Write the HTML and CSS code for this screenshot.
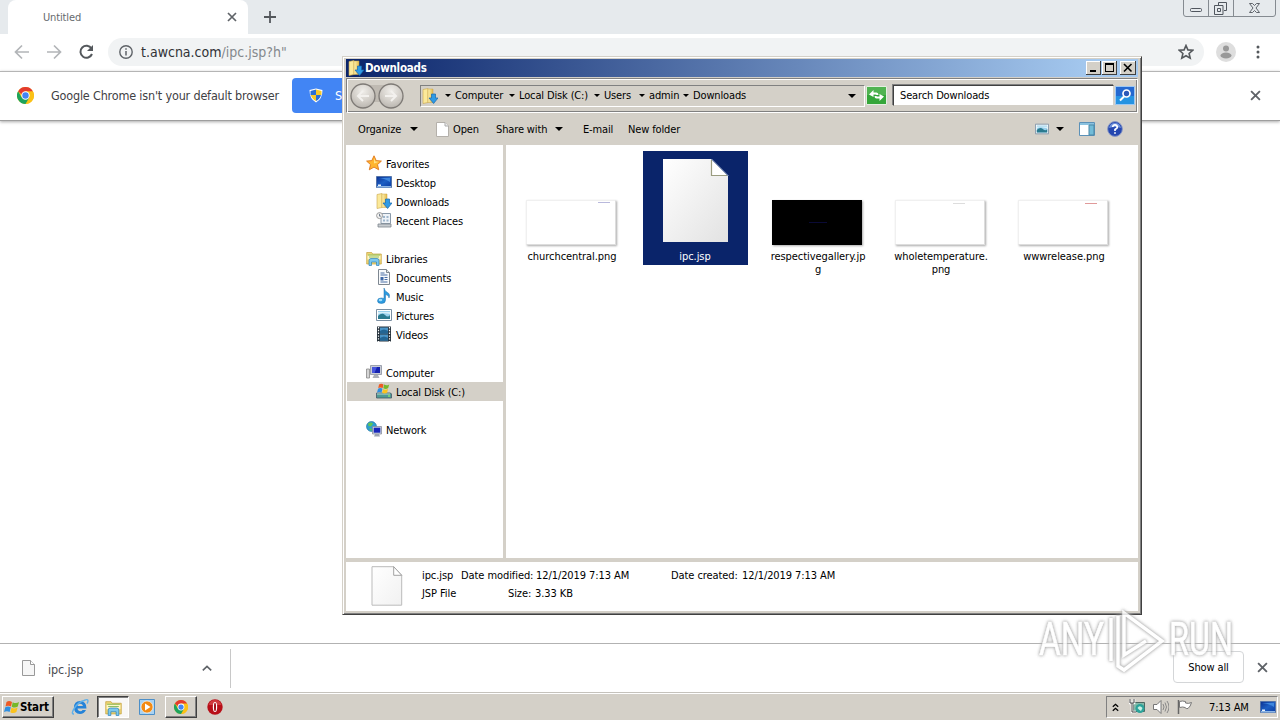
FILE: index.html
```html
<!DOCTYPE html>
<html lang="en">
<head>
<meta charset="utf-8">
<title>Downloads</title>
<link rel="stylesheet" href="styles.css">
</head>
<body>
<svg width="0" height="0" class="defs">
  <defs>
    <linearGradient id="gFolder" x1="0" x2="1"><stop offset="0" stop-color="#fff3b0"/><stop offset="1" stop-color="#e3b94c"/></linearGradient>
    <linearGradient id="gPage" x1="0" y1="0" x2="1" y2="1"><stop offset="0" stop-color="#fff"/><stop offset="1" stop-color="#e2e2e2"/></linearGradient>
    <linearGradient id="gPale" x1="0" y1="0" x2="1" y2="1"><stop offset="0" stop-color="#fff"/><stop offset="1" stop-color="#f1f1f1"/></linearGradient>
    <linearGradient id="gBlue" x1="0" y1="0" x2="1" y2="1"><stop offset="0" stop-color="#0b2f8f"/><stop offset=".5" stop-color="#1d5fc4"/><stop offset="1" stop-color="#0a3aa0"/></linearGradient>
    <radialGradient id="gNav" cx=".5" cy=".3" r=".75"><stop offset="0" stop-color="#f0eeea"/><stop offset=".6" stop-color="#d0ccc6"/><stop offset="1" stop-color="#b5b1ab"/></radialGradient>
    <symbol id="dl" viewBox="0 0 16 16"><path d="M1 1.500 6 .5v14l-5 1z" fill="#fbe99a" stroke="#c9a64a" stroke-width=".6"/><path d="M6 1h5v13.500H6z" fill="url(#gFolder)" stroke="#c9a64a" stroke-width=".5"/><path d="M9.500 6h4v4H16l-4.400 5.500L7 10h2.500z" fill="#2f9be6" stroke="#1767ad" stroke-width=".7"/></symbol>
    <symbol id="lib" viewBox="0 0 16 16"><path d="M.7 2.500h5l1 1.500h8.600v10H.7z" fill="#efd675" stroke="#c4a03d" stroke-width=".7"/><path d="M1.500 5.500h13v4h-13z" fill="#fff6c6"/><path d="M2 5h12M3 7h10" stroke="#8bbf64" stroke-width="1"/><path d="M3 15.500v-5q0-2 2-2h6q2 0 2 2v5h-2.500v-3.500h-5v3.500z" fill="#7cc8ee" stroke="#2c83bb" stroke-width=".7"/></symbol>
    <symbol id="star" viewBox="0 0 16 16"><path d="m8 .8 2.200 4.800 5.200.5-3.900 3.500 1.200 5.200L8 12.100l-4.700 2.700 1.200-5.200L.6 6.100l5.200-.5z" fill="#ffb52e" stroke="#e0761a" stroke-width=".9"/><path d="m8 3 1.300 3.500 3.700.3-5 1.700z" fill="#ffe28a"/></symbol>
    <symbol id="desk" viewBox="0 0 16 16"><path d="M.5 2.500h15v11H.5z" fill="url(#gBlue)" stroke="#5574a8"/><path d="M2 4q6 0 12 4V4z" fill="#3e86dd"/><path d="M1 12h14v1.500H1z" fill="#8db6e6"/><path d="M2 10.500h3v1.500H2z" fill="#e8f2fc"/></symbol>
    <symbol id="recent" viewBox="0 0 16 16"><path d="M5 1.500h9.500v10H5z" fill="#eef3f8" stroke="#8a9aaa"/><path d="M7 4h2v2H7zM10.500 4h2v2h-2zM7 7.500h2v2H7zM10.500 7.500h2v2h-2z" fill="#9db6cc"/><path d="M2 12h13v3H2z" fill="#c7ccd0" stroke="#7e868e" stroke-width=".8"/><circle cx="3.600" cy="3.600" r="3" fill="#f3f3f3" stroke="#9a9a9a"/><path d="M3.500 1.800v2.300H5.200" fill="none" stroke="#567" stroke-width=".8"/></symbol>
    <symbol id="doc" viewBox="0 0 16 16"><path d="M2.500.5h8l3 3v12h-11z" fill="#f8fafc" stroke="#7e8791"/><path d="M10.500.5v3h3" fill="#dfe5ea" stroke="#7e8791"/><path d="M4.500 4h4M4.500 6h7M8.500 8.500h3M8.500 10.500h3M4.500 13h7" stroke="#4a6ea5"/><path d="M4.500 8h3v3.500h-3z" fill="#3d67a6"/></symbol>
    <symbol id="music" viewBox="0 0 16 16"><path d="M8 0q.5 3 3.500 4.500T13 10q0-3-3.500-3.500V12q0 3.500-4 3.500t-4-2.500q0-3 3.500-3 1.500 0 3 .5z" fill="#2c9be0" stroke="#1c6fac" stroke-width=".5"/><ellipse cx="4.500" cy="12" rx="1.800" ry="1.200" fill="#9fdcfa"/></symbol>
    <symbol id="pic" viewBox="0 0 16 16"><path d="M.5 2.500h15v11H.5z" fill="#fff" stroke="#7a8fa2"/><path d="M2 4h12v8H2z" fill="#9ad0ec"/><path d="M2 9q4-4 7-1t5 0v4H2z" fill="#2a7a8f"/><path d="M2 7.500q3-2 5-1.500l7 1V5H2z" fill="#d8eff8"/></symbol>
    <symbol id="video" viewBox="0 0 16 16"><path d="M1 .5h14v15H1z" fill="#26323c"/><path d="M4 1.500h8v6H4zM4 8.500h8v6H4z" fill="#4b95c8"/><path d="M4 5q4-3 8 0v2.500H4zM4 12q4-3 8 0v2.500H4z" fill="#226593"/><path d="M2.500 1v15M13.500 1v15" stroke="#fff" stroke-width="1.200" stroke-dasharray="1.400 1.400"/></symbol>
    <symbol id="comp" viewBox="0 0 16 16"><path d="M.5 5h3v9h-3z" fill="#d5d5d5" stroke="#888" stroke-width=".8"/><path d="M4.500 1.500h11v9h-11z" fill="#c7cbd6" stroke="#8a90a0" stroke-width=".8"/><path d="M6 3h8v6H6z" fill="#1522b0"/><path d="M6 3h5L8.500 9H6z" fill="#4755dd"/><path d="M8 11h4l1.500 3h-7z" fill="#a9adb8"/></symbol>
    <symbol id="flag" viewBox="0 0 16 16"><path d="M2.500 3Q5 1 8 3L7 7.500Q4 6 1.500 7.500z" fill="#ee5a24"/><path d="M8.700 3.200Q12 5 15 3l-1.200 4.500Q11 9.500 7.700 7.700z" fill="#76b82a"/><path d="M1.300 8.300Q4 6.700 6.800 8.300L5.600 13Q3 11.500 0 13z" fill="#2f8fe0"/><path d="M7.500 8.500Q10 10.300 13.600 8.500l-1.200 4.600Q9.500 15 6.300 13.200z" fill="#fbc31e"/></symbol>
    <symbol id="disk" viewBox="0 0 16 16"><path d="M.5 10h14l1 1v4H.5z" fill="#4f9a94" stroke="#456" stroke-width=".8"/><path d="M1 11h13" stroke="#b8d8cc"/><path d="M12 13h2" stroke="#9f6"/><use href="#flag" x="1" y="-1" width="13" height="13"/></symbol>
    <symbol id="net" viewBox="0 0 16 16"><circle cx="5.500" cy="5.500" r="5" fill="#2c9fd0" stroke="#1e6f9f" stroke-width=".6"/><path d="M2 2.500q3-2 5 0L5 5.500 2.500 5zM3 7l3 1-1 2.300z" fill="#62c455"/><path d="M6.500 5.500h9v7.500h-9z" fill="#ccd3e0" stroke="#7c8494" stroke-width=".7"/><path d="M7.700 6.700h6.600v5H7.700z" fill="#1826bb"/><path d="M9 13h4l1 2.500H8z" fill="#9ca3b0"/></symbol>
    <symbol id="page" viewBox="0 0 32 40"><path d="M1 .7h21.700l8 8.600v29.900H1z" fill="url(#gPale)" stroke="#bbb" stroke-width="1"/><path d="M22.700.7v8.600h8z" fill="#fff" stroke="#999" stroke-width=".9"/></symbol>
    <symbol id="chrome" viewBox="0 0 16 16"><circle cx="8" cy="8" r="8" fill="#fbc116"/><path d="M8 8V4h6.930A8 8 0 0 1 8 16l3.500-6z" fill="#fbc116"/><path d="M1.070 4 4.540 10 8 8l3.460 2L8 16A8 8 0 0 1 1.070 4z" fill="#1da45c"/><path d="M1.070 4A8 8 0 0 1 14.930 4H8L4.500 7z" fill="#e33b2e"/><circle cx="8" cy="8" r="3.900" fill="#fff"/><circle cx="8" cy="8" r="3" fill="#4285f4"/></symbol>
    <symbol id="x" viewBox="0 0 10 10"><path d="m1 1 8 8M9 1 1 9" stroke="#5f6368" stroke-width="1.700"/></symbol>
    <symbol id="tri" viewBox="0 0 8 4"><path d="M0 0h8L4 4z"/></symbol>
  </defs>
</svg>
<div class="screen">
  <div class="tabstrip">
    <div class="tab"><span>Untitled</span><svg width="10" height="10"><use href="#x"/></svg></div>
    <svg class="plus" width="12" height="12" viewBox="0 0 12 12"><path d="M6 0v12M0 6h12" stroke="#54585c" stroke-width="1.800"/></svg>
    <svg class="caption" width="93" height="18" viewBox="0 0 93 18" fill="none" stroke="#858b91"><path d="M.5-3v17q0 2.500 2.500 2.500h87q2.500 0 2.500-2.500V-3M25.500-1v17M50.500-1v17"/><g stroke="#50565e"><rect x="7.500" y="8.500" width="11" height="3" rx="1"/><path d="M35.500 5V2.500h8v8H41"/><path d="M31.500 5.500h8.500v9h-8.500z"/><path d="M34.500 8.500h3v3h-3z"/><path d="M66.500 3.500h3l2 2 2-2h3l-3.500 4.500 3.500 4.500h-3l-2-2-2 2h-3L70 8z" stroke-width=".9"/></g></svg>
  </div>
  <div class="navbar">
    <svg width="100" height="20" viewBox="0 0 100 20" fill="none" stroke-width="1.700"><path d="M29 10H16M22 3.500 15.500 10l6.500 6.500M47 10h13M54 3.500l6.500 6.500-6.500 6.500" stroke="#b2b5b8"/><path d="M91.500 6.500A6 6 0 1 0 92 12" stroke="#54585c" stroke-width="2"/><path d="M93 3v6h-6z" fill="#54585c"/></svg>
    <div class="omnibox">
      <svg width="14" height="14" viewBox="0 0 14 14"><circle cx="7" cy="7" r="6.200" fill="none" stroke="#5f6368" stroke-width="1.400"/><path d="M7 6v4.500M7 3.300v1.500" stroke="#5f6368" stroke-width="1.500"/></svg>
      <span class="url"><b>t.awcna.com</b>/ipc.jsp?h"</span>
      <svg class="bookmark" width="16" height="16" viewBox="0 0 16 16"><path d="m8 1.500 1.900 4.400 4.800.4-3.600 3.200 1.100 4.700L8 11.700l-4.200 2.500 1.100-4.700L1.300 6.300l4.800-.4z" fill="none" stroke="#54585c" stroke-width="1.600"/></svg>
    </div>
    <svg class="avatar" width="20" height="20" viewBox="0 0 20 20"><circle cx="10" cy="10" r="10" fill="#dedede"/><circle cx="10" cy="6.500" r="3" fill="#999"/><ellipse cx="10" cy="13.500" rx="5.500" ry="3" fill="#999"/></svg>
    <svg class="menu" width="4" height="14" viewBox="0 0 4 14" fill="#54585c"><circle cx="2" cy="2" r="1.500"/><circle cx="2" cy="7" r="1.500"/><circle cx="2" cy="12" r="1.500"/></svg>
  </div>
  <div class="infobar">
    <svg width="17" height="17"><use href="#chrome"/></svg>
    <span class="t-info">Google Chrome isn't your default browser</span>
    <div class="default-btn"><svg width="14" height="15" viewBox="0 0 14 15"><path d="M7 .5 13.500 2q0 9-6.500 12.500Q.5 11 .5 2z" fill="#fff"/><path d="M7 1.500V7H1.500V3zM7 7h5q-1 4-5 6z" fill="#2a6fd6"/><path d="M7 1.500V7h5.500V3zM7 7H1.800Q3 11 7 13z" fill="#f7c928"/></svg><span>S</span></div>
    <svg class="info-x" width="11" height="11"><use href="#x"/></svg>
  </div>
  <div class="page"></div>
  <div class="shelf">
    <svg width="13" height="16" viewBox="0 0 13 16"><path d="M.5.500h8l4 4v11H.5z" fill="#f6f6f6" stroke="#999"/><path d="M8.500.5v4h4" fill="#fff" stroke="#999"/></svg>
    <span class="t-shelf">ipc.jsp</span>
    <svg class="chev" width="10" height="6" viewBox="0 0 10 6"><path d="m.8 5.300 4.200-4 4.200 4" fill="none" stroke="#5f6368" stroke-width="1.600"/></svg>
    <i class="sep"></i>
    <div class="showall"><span>Show all</span></div>
    <svg class="shelf-x" width="11" height="11"><use href="#x"/></svg>
  </div>
  <div class="taskbar">
    <div class="start"><svg width="16" height="16"><use href="#flag"/></svg><span>Start</span></div>
    <svg class="ie" width="18" height="18" viewBox="0 0 18 18"><path d="M15 12q-2 4-6 4-6 0-6-6.500T9 3q6.500 0 6.500 7.500H6.500q.5 2.800 3 2.800 1.500 0 2-1.300zM6.500 8H12Q11.500 5.700 9 5.700T6.500 8z" fill="#2583d8" fill-rule="evenodd"/><path d="M3 16Q-.5 16 3.500 10T13 2.500q4-2 4 .5 0 1-1 2.500" fill="none" stroke="#5fb0ea" stroke-width="1.400"/></svg>
    <div class="task active"><svg width="17" height="17"><use href="#lib"/></svg></div>
    <svg class="wmp" width="16" height="16" viewBox="0 0 16 16"><path d="M.5.500h15v15H.5z" fill="#a8d2f2" stroke="#4c8fc8"/><circle cx="8" cy="8" r="6" fill="#f38a13" stroke="#fff" stroke-width=".6"/><path d="m6 4.500 5.500 3.500L6 11.500z" fill="#fff"/></svg>
    <div class="task"><svg width="14" height="14"><use href="#chrome"/></svg></div>
    <svg class="opera" width="16" height="16" viewBox="0 0 16 16"><circle cx="8" cy="8" r="7.700" fill="#b80f18"/><path d="M1.500 6Q3 1 8 1t6.500 5z" fill="#e05858" opacity=".6"/><ellipse cx="8" cy="8" rx="2.200" ry="5" fill="#fff"/><ellipse cx="8" cy="8" rx="1" ry="4.200" fill="#a00c14"/></svg>
    <div class="tray">
      <svg width="7" height="9" viewBox="0 0 7 9" fill="none" stroke="#000" stroke-width="1.300"><path d="m.8 3.800 2.700-2.500 2.700 2.500M.8 7.800l2.700-2.500 2.700 2.500"/></svg>
      <svg width="16" height="16" viewBox="0 0 16 16"><path d="M4.500 3.500h11v9h-11z" fill="#84b9a8" stroke="#4d6660"/><circle cx="11" cy="9.500" r="4.500" fill="#2ba39a"/><path d="M8.500 9q2-3.500 5 0l-1.500 3q-2-1-3.500-3z" fill="#c9f0e4"/><path d="M1 0v4h4V0M3 4v9h4" fill="none" stroke="#fff" stroke-width="2.600"/><path d="M1 0v4h4V0M3 4v9h4" fill="none" stroke="#444"/></svg>
      <svg width="16" height="14" viewBox="0 0 16 14" fill="none" stroke="#777"><path d="M.5 4.500H4l4-4v13l-4-4H.5z" fill="#fff"/><path d="M10 4q2 3 0 6M12 2.500q3 4.500 0 9M14 1q4 6 0 12" stroke="#888"/></svg>
      <svg width="16" height="14" viewBox="0 0 16 14"><path d="M1.500 0v14" stroke="#666" stroke-width="1.500"/><path d="M2.500 1.500q3-1 6 0V3q3 1 6-.5-1 4-3.500 6-2 .5-3-1-2-1-5.500 0z" fill="#fff" stroke="#777"/></svg>
      <span>7:13 AM</span>
      <svg class="showdesk" width="16" height="16"><use href="#desk"/></svg>
    </div>
  </div>

  <div class="window">
    <div class="titlebar"><svg width="16" height="16"><use href="#dl"/></svg><span class="t-title">Downloads</span>
      <div class="wbtns">
        <svg width="15" height="14" viewBox="0 0 15 14"><path d="M0 0h15v14H0z" fill="#404040"/><path d="M0 0h14v13H0z" fill="#fff"/><path d="M1 1h13v12H1z" fill="#d4d0c8"/><path d="M4 9h6v2H4z"/></svg><svg width="15" height="14" viewBox="0 0 15 14"><path d="M0 0h15v14H0z" fill="#404040"/><path d="M0 0h14v13H0z" fill="#fff"/><path d="M1 1h13v12H1z" fill="#d4d0c8"/><path d="M3 2h9v9H3zm1 2v6h7V4z" fill-rule="evenodd"/></svg><svg class="wclose" width="16" height="14" viewBox="0 0 16 14"><path d="M0 0h16v14H0z" fill="#404040"/><path d="M0 0h15v13H0z" fill="#fff"/><path d="M1 1h14v12H1z" fill="#d4d0c8"/><path d="m4 3 7.500 7.500m0-7.500L4 10.500" stroke="#000" stroke-width="1.600"/></svg>
      </div>
    </div>
    <div class="addressrow">
      <svg class="navs" width="56" height="28" viewBox="0 0 56 28"><path d="M13 3h29v17H13z" fill="#bfbab2"/><g fill="url(#gNav)" stroke="#7e7a76" stroke-width="1.300"><circle cx="14" cy="14" r="12"/><circle cx="42" cy="14" r="12"/></g><path d="M20 14H9m5-5-5 5 5 5M36 14h11m-5-5 5 5-5 5" fill="none" stroke="#f3f1ee" stroke-width="2"/></svg>
      <div class="crumbs">
        <svg width="16" height="16"><use href="#dl"/></svg><svg class="ar" width="6" height="3"><use href="#tri"/></svg>
        <span class="c1">Computer</span><svg class="ar" width="6" height="3"><use href="#tri"/></svg>
        <span class="c2">Local Disk (C:)</span><svg class="ar" width="6" height="3"><use href="#tri"/></svg>
        <span class="c3">Users</span><svg class="ar" width="6" height="3"><use href="#tri"/></svg>
        <span class="c4">admin</span><svg class="ar" width="6" height="3"><use href="#tri"/></svg>
        <span class="c5">Downloads</span><svg class="drop" width="8" height="4"><use href="#tri"/></svg>
      </div>
      <svg class="refresh" width="21" height="19" viewBox="0 0 21 19"><path d="M.5.500h20v18H.5z" fill="#35a63a" stroke="#e4efe0"/><path d="M1 1h19v8H1z" fill="#62bd60" opacity=".6"/><path d="M3 8.500 7.500 4v2.500h3q2 0 2 2.500h-2q0-.5-1-.5h-2V11zM18 10.500 13.500 15v-2.500h-3q-2 0-2-2.500h2q0 .5 1 .5h2V8z" fill="#fff"/></svg>
      <div class="search"><span>Search Downloads</span></div>
      <svg class="go" width="20" height="19" viewBox="0 0 20 19"><path d="M.5.500h19v18H.5z" fill="#2468d0" stroke="#9cc8f4"/><path d="M1 10h18v8H1z" fill="#26a5ea" opacity=".7"/><circle cx="11.500" cy="7.500" r="3.500" fill="#2b59b9" stroke="#fff" stroke-width="1.700"/><path d="m9 10.500-4 4" stroke="#fff" stroke-width="2"/></svg>
    </div>
    <div class="toolbar">
      <span class="b1">Organize</span><svg class="ta" width="8" height="4"><use href="#tri"/></svg>
      <svg class="tp" width="13" height="15" viewBox="0 0 13 15"><path d="M.5.500h8.500l3.500 3.500v10.500H.5z" fill="#fff" stroke="#b4b0aa"/><path d="M9 .5V4h3.500" fill="#eee" stroke="#aaa"/></svg>
      <span class="b2">Open</span><span class="b3">Share with</span><svg class="tb" width="8" height="4"><use href="#tri"/></svg>
      <span class="b4">E-mail</span><span class="b5">New folder</span>
      <svg class="tv" width="14" height="12" viewBox="0 2 16 12"><use href="#pic" width="16" height="16"/></svg>
      <svg class="tc" width="8" height="4"><use href="#tri"/></svg>
      <svg class="tpane" width="16" height="14" viewBox="0 0 16 14"><path d="M.5.500h15v13H.5z" fill="#fff" stroke="#5c91b8"/><path d="M1 1h14v2H1z" fill="#8bc2df"/><path d="M10 3h5v10h-5z" fill="#72bcd8" stroke="#4b87a5"/></svg>
      <svg class="help" width="16" height="16" viewBox="0 0 16 16"><circle cx="8" cy="8" r="7.400" fill="#2547b0" stroke="#8b9ac6"/><path d="M2 7Q3 2 8 2t6 5q-6-2-12 0" fill="#6f92dc"/><path d="M5.700 6Q6 3.800 8 3.800T10.400 6Q10.400 7.200 8 8.600V10M8 11.200v1.600" fill="none" stroke="#fff" stroke-width="1.700"/></svg>
    </div>
    <div class="content">
      <div class="tree">
        <div class="row"><svg><use href="#star"/></svg><span>Favorites</span></div>
        <div class="row sub"><svg><use href="#desk"/></svg><span>Desktop</span></div>
        <div class="row sub"><svg><use href="#dl"/></svg><span>Downloads</span></div>
        <div class="row sub"><svg><use href="#recent"/></svg><span>Recent Places</span></div>
        <div class="row gap"><svg><use href="#lib"/></svg><span>Libraries</span></div>
        <div class="row sub"><svg><use href="#doc"/></svg><span>Documents</span></div>
        <div class="row sub"><svg><use href="#music"/></svg><span>Music</span></div>
        <div class="row sub"><svg><use href="#pic"/></svg><span>Pictures</span></div>
        <div class="row sub"><svg><use href="#video"/></svg><span>Videos</span></div>
        <div class="row gap"><svg><use href="#comp"/></svg><span>Computer</span></div>
        <div class="row sub selected"><svg><use href="#disk"/></svg><span>Local Disk (C:)</span></div>
        <div class="row gap"><svg><use href="#net"/></svg><span>Network</span></div>
      </div>
      <div class="files">
        <div class="file"><div class="thumb t1"><i></i></div><span>churchcentral.png</span></div>
        <div class="file sel"><svg width="66" height="84" viewBox="0 0 66 84"><path d="M0 0h48l17 17v66H0z" fill="url(#gPage)"/><path d="M48.500 1v15.500H64" fill="#fff" stroke="#9a9c80" stroke-width="1.200"/><path d="m48.500 0 17 17" stroke="#8ea0c4"/></svg><span>ipc.jsp</span></div>
        <div class="file"><div class="thumb t3"><i></i></div><span>respectivegallery.jp<br>g</span></div>
        <div class="file"><div class="thumb t4"><i></i></div><span>wholetemperature.<br>png</span></div>
        <div class="file"><div class="thumb t5"><i></i></div><span>wwwrelease.png</span></div>
      </div>
    </div>
    <div class="details">
      <svg width="32" height="40"><use href="#page"/></svg>
      <div class="meta">
        <div class="line"><span class="d1">ipc.jsp</span><span class="d2">Date modified:</span><span class="d3">12/1/2019 7:13 AM</span><span class="d4">Date created:</span><span class="d5">12/1/2019 7:13 AM</span></div>
        <div class="line"><span class="d6">JSP File</span><span class="d7">Size:</span><span class="d8">3.33 KB</span></div>
      </div>
    </div>
  </div>

  <svg class="watermark" width="204" height="72" viewBox="0 0 204 72">
    <text x="5" y="50" textLength="65" lengthAdjust="spacingAndGlyphs">ANY</text>
    <path d="M77 13v43M84 11v50l6 4 38-29L90 8v42l22-14"/>
    <text x="135" y="50" textLength="64" lengthAdjust="spacingAndGlyphs">RUN</text>
  </svg>
</div>
</body>
</html>
```
FILE: styles.css
```css
* { box-sizing: border-box; }
body { margin: 0; background: #fff; overflow: hidden; }
.defs { position: absolute; }
svg { display: block; flex: none; }
span { white-space: nowrap; flex: none; }
.screen { position: relative; width: 1280px; height: 720px; display: flex; flex-direction: column; font: 11px/13px "DejaVu Sans Condensed", "DejaVu Sans", sans-serif; font-stretch: condensed; color: #000; letter-spacing: -0.14px; }

.tabstrip { height: 34px; background: #e6eaed; display: flex; align-items: flex-start; padding-left: 8px; }
.tab { width: 240px; height: 34px; background: #fff; border-radius: 8px 8px 0 0; display: flex; align-items: center; justify-content: space-between; padding: 0 11px 0 35px; color: #666a6e; }
.plus { margin: 11px 0 0 16px; }
.caption { margin: 0 4px 0 auto; }
.navbar { height: 37px; display: flex; align-items: center; background: #fff; padding-bottom: 1px; }
.omnibox { margin-left: 8px; width: 1096px; height: 28px; border-radius: 14px; background: #f1f3f4; display: flex; align-items: center; padding: 0 10px 0 11px; }
.url { margin-left: 8px; font-size: 14px; line-height: 18px; color: #84888c; letter-spacing: 0; }
.url b { font-weight: normal; color: #303236; }
.bookmark { margin-left: auto; }
.avatar { margin-left: 12px; }
.menu { margin-left: 20px; }
.infobar { height: 50px; border-top: 1px solid #b5b5b5; border-bottom: 1px solid #9e9e9e; box-shadow: 0 1px 3px #aaa; display: flex; align-items: center; padding: 0 0 1px 17px; background: #fff; z-index: 1; }
.t-info { margin-left: 17px; width: 241px; font-size: 12.5px; color: #3f4144; letter-spacing: -0.18px; }
.default-btn { width: 140px; height: 35px; border-radius: 4px; background: #4285f4; display: flex; align-items: center; padding-left: 17px; gap: 12px; color: #fff; font-size: 12.5px; overflow: hidden; }
.info-x { margin: 0 19px 0 auto; }
.page { flex: 1; }
.shelf { height: 49px; border-top: 1px solid #b2b2b2; display: flex; align-items: center; padding-left: 22px; background: #fff; }
.t-shelf { margin: 3px 0 0 13px; width: 154px; font-size: 12.5px; color: #4a4c50; }
.sep { width: 1px; height: 39px; background: #c8c8c8; margin-left: 18px; }
.showall { margin: 0 0 2px auto; width: 71px; height: 32px; border: 1px solid #d4d6d8; border-radius: 4px; display: flex; align-items: center; justify-content: center; }
.shelf-x { margin: 0 12px 2px 13px; }

.taskbar { height: 28px; background: #d4d0c8; border-top: 1px solid #c5c2bc; box-shadow: inset 0 1px #fff; display: flex; align-items: center; padding: 1px 2px 0 2px; }
.start { width: 52px; height: 22px; display: flex; align-items: center; gap: 0; padding-left: 1px; border: 1px solid; border-color: #fff #404040 #404040 #fff; box-shadow: inset -1px -1px #808080; font-weight: bold; font-size: 11.5px; }
.ie { margin-left: 17px; }
.task { width: 32px; height: 22px; border: 1px solid; border-color: #fff #404040 #404040 #fff; box-shadow: inset -1px -1px #808080; display: flex; align-items: center; justify-content: center; }
.task.active { margin-left: 8px; border-color: #404040 #fff #fff #404040; box-shadow: inset 1px 1px #808080; background: #f8f7f6; }
.wmp { margin: 0 10px; }
.opera { margin-left: 10px; }
.tray { margin-left: auto; width: 172px; height: 22px; border: 1px solid; border-color: #808080 #fff #fff #808080; display: flex; align-items: center; padding-left: 5px; }
.tray svg:nth-child(2) { margin-left: 10px; }
.tray svg:nth-child(3) { margin-left: 8px; }
.tray svg:nth-child(4) { margin-left: 8px; }
.tray span { margin-left: 16px; width: 41px; }
.tray .showdesk { margin-left: 10px; }

.window { position: absolute; left: 342px; top: 56px; width: 800px; height: 559px; z-index: 2; background: #d4d0c8; border: 1px solid; border-color: #d4d0c8 #404040 #404040 #d4d0c8; box-shadow: inset 1px 1px #fff, inset -1px -1px #808080; padding: 2px 3px; display: flex; flex-direction: column; }
.titlebar { height: 18px; background: linear-gradient(90deg, #0a246a, #a6caf0 95%); display: flex; align-items: center; padding: 0 2px; }
.t-title { margin-left: 1px; color: #fff; font-weight: bold; font-size: 11.5px; letter-spacing: -0.25px; }
.wbtns { margin-left: auto; display: flex; gap: 1px; }
.wclose { margin-left: 2px; }
.addressrow { margin-top: 1px; height: 35px; border: 1px solid; border-color: #808080 #fff #fff #808080; box-shadow: inset 1px 1px #fff, inset -1px -1px #808080; display: flex; align-items: center; padding-left: 2px; }
.crumbs { margin-left: 15px; width: 445px; height: 22px; border: 1px solid; border-color: #808080 #fff #fff #808080; display: flex; align-items: center; padding-left: 1px; }
.crumbs .ar { margin: 0 4px 0 6px; }
.crumbs > svg:first-child + .ar { margin-left: 7px; }
.c1 { width: 48px; }
.c2 { width: 69px; }
.c3 { width: 29px; }
.c4 { width: 28px; }
.c5 { width: 54px; }
.drop { margin-left: 101px; }
.refresh { margin-left: 1px; }
.search { margin-left: 6px; width: 221px; height: 21px; background: #fff; border: 1px solid; border-color: #404040 #d4d0c8 #d4d0c8 #404040; box-shadow: -1px -1px #808080; padding: 3px 0 0 6px; }
.go { margin-left: 1px; }
.toolbar { height: 32px; display: flex; align-items: center; padding-left: 12px; }
.b1 { width: 44px; }
.b2 { width: 27px; }
.b3 { width: 52px; margin-left: 16px; }
.b4 { width: 29px; }
.b5 { width: 53px; margin-left: 16px; }
.ta { margin-left: 8px; }
.tp { margin: 0 4px 0 18px; }
.tb { margin: 0 20px 0 7px; }
.tv { margin-left: 348px; }
.tv { margin-left: 348px; padding: 0; }
.b5 + .tv { margin-left: 354px; }
.tc { margin-left: 7px; }
.tpane { margin-left: 15px; }
.help { margin-left: 12px; }
.content { height: 413px; display: flex; }
.tree { width: 157px; background: #fff; padding: 9px 0 0 1px; }
.row { height: 19px; display: flex; align-items: center; padding-left: 19px; gap: 4px; }
.row svg { width: 16px; height: 16px; margin-bottom: 1px; }
.row.sub { padding-left: 29px; }
.row.gap { margin-top: 19px; }
.row.selected { background: #d4d0c8; }
.row span { padding-top: 1px; }
.files { margin-left: 3px; flex: 1; background: #fff; display: flex; padding: 6px 0 0 14px; gap: 18px; }
.file { width: 105px; height: 114px; display: flex; flex-direction: column; align-items: center; text-align: center; flex: none; }
.file span { margin-top: 5px; margin-right: 1px; letter-spacing: -0.06px; }
.file.sel { margin-left: 0; background: #0a246a; color: #fff; padding-top: 8px; }
.file.sel span { margin-top: 7px; }
.thumb { width: 90px; height: 45px; margin: 49px 3px 0 0; background: #fff; border: 1px solid #f0f0f0; border-right-color: #ddd; border-bottom-color: #ddd; box-shadow: 1px 1px 2px #aaa; display: flex; justify-content: flex-end; flex: none; }
.thumb i { width: 12px; height: 1px; background: #b9b9dc; margin: 1px 5px 0 0; }
.thumb.t3 { background: #000; border-color: #000; }
.t3 i { width: 18px; background: #0a0a36; margin: 21px 34px 0 0; }
.t4 i { background: #ddd; margin: 2px 19px 0 0; }
.t5 i { background: #e09a9a; margin: 2px 10px 0 0; }
.details { margin-top: 4px; height: 49px; background: #fff; display: flex; padding: 4px 0 0 25px; }
.meta { margin-left: 19px; display: flex; flex-direction: column; gap: 5px; padding-top: 3px; letter-spacing: -0.08px; }
.line { display: flex; }
.d1 { width: 39px; }
.d2 { width: 75px; }
.d3 { width: 135px; }
.d4 { width: 71px; }
.d6 { width: 86px; }
.d7 { width: 27px; }

.watermark { position: absolute; left: 1034px; top: 605px; z-index: 3; font: 46px Roboto, sans-serif; letter-spacing: 0; fill: #fff; stroke: #fff; stroke-width: .6; opacity: .85; filter: drop-shadow(0 0 1.5px #999) drop-shadow(0 0 1.5px #ccc); }
.watermark path { fill: none; stroke-width: 3.5; }
```
